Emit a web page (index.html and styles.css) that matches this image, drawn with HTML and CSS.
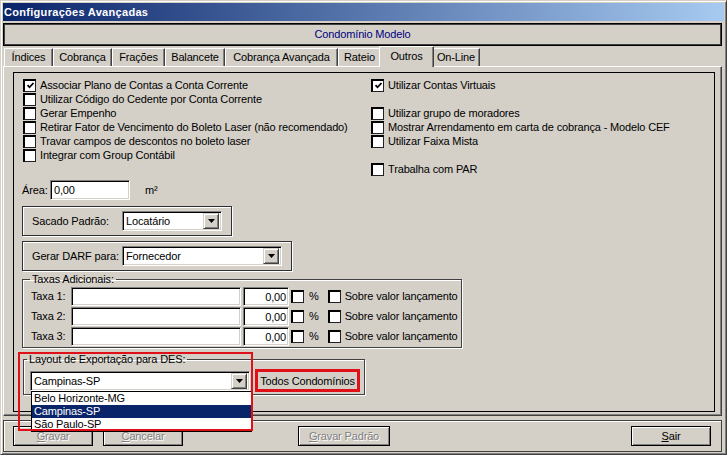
FILE: index.html
```html
<!DOCTYPE html>
<html lang="pt">
<head>
<meta charset="utf-8">
<title>Configurações Avançadas</title>
<link rel="stylesheet" href="styles.css">
</head>
<body>
<div class="window">
  <div class="titlebar">Configurações Avançadas</div>
  <div class="header">Condomínio Modelo</div>
  <div class="tabs">
    <div class="tab t1">Índices</div>
    <div class="tab t2">Cobrança</div>
    <div class="tab t3">Frações</div>
    <div class="tab t4">Balancete</div>
    <div class="tab t5">Cobrança Avançada</div>
    <div class="tab t6">Rateio</div>
    <div class="tab t7 active">Outros</div>
    <div class="tab t8">On-Line</div>
  </div>
  <div class="tabpage">
    <div class="panel">
      <div class="checks">
        <div class="col">
          <div class="chk-row"><span class="cb checked"><svg width="9" height="9" viewBox="0 0 9 9"><polyline points="1.5,4.2 3.5,6.3 7.5,2" fill="none" stroke="#000" stroke-width="1.8"/></svg></span>Associar Plano de Contas a Conta Corrente</div>
          <div class="chk-row"><span class="cb"></span>Utilizar Código do Cedente por Conta Corrente</div>
          <div class="chk-row"><span class="cb"></span>Gerar Empenho</div>
          <div class="chk-row"><span class="cb"></span>Retirar Fator de Vencimento do Boleto Laser (não recomendado)</div>
          <div class="chk-row"><span class="cb"></span>Travar campos de descontos no boleto laser</div>
          <div class="chk-row"><span class="cb"></span>Integrar com Group Contábil</div>
        </div>
        <div class="col">
          <div class="chk-row"><span class="cb checked"><svg width="9" height="9" viewBox="0 0 9 9"><polyline points="1.5,4.2 3.5,6.3 7.5,2" fill="none" stroke="#000" stroke-width="1.8"/></svg></span>Utilizar Contas Virtuais</div>
          <div class="chk-row"></div>
          <div class="chk-row"><span class="cb"></span>Utilizar grupo de moradores</div>
          <div class="chk-row"><span class="cb"></span>Mostrar Arrendamento em carta de cobrança - Modelo CEF</div>
          <div class="chk-row"><span class="cb"></span>Utilizar Faixa Mista</div>
          <div class="chk-row"></div>
          <div class="chk-row"><span class="cb"></span>Trabalha com PAR</div>
        </div>
      </div>

      <div class="area-row">
        <span class="area-label">Área:</span>
        <span class="edit area-edit">0,00</span>
        <span class="unit">m²</span>
      </div>

      <div class="boxed sacado">
        <span class="box-label">Sacado Padrão:</span>
        <div class="combo combo-sacado">
          <span class="combo-text">Locatário</span>
          <span class="combo-btn"><svg width="7" height="4" viewBox="0 0 7 4"><polygon points="0,0 7,0 3.5,4" fill="#000"/></svg></span>
        </div>
      </div>

      <div class="boxed darf">
        <span class="box-label">Gerar DARF para:</span>
        <div class="combo combo-darf">
          <span class="combo-text">Fornecedor</span>
          <span class="combo-btn"><svg width="7" height="4" viewBox="0 0 7 4"><polygon points="0,0 7,0 3.5,4" fill="#000"/></svg></span>
        </div>
      </div>

      <fieldset class="group taxas">
        <legend>Taxas Adicionais:</legend>
        <div class="taxa-row">
          <span class="taxa-label">Taxa 1:</span>
          <span class="edit taxa-desc"></span>
          <span class="edit taxa-val">0,00</span>
          <span class="cb cb-pct"></span><span class="pct">%</span>
          <span class="cb cb-sobre"></span><span>Sobre valor lançamento</span>
        </div>
        <div class="taxa-row">
          <span class="taxa-label">Taxa 2:</span>
          <span class="edit taxa-desc"></span>
          <span class="edit taxa-val">0,00</span>
          <span class="cb cb-pct"></span><span class="pct">%</span>
          <span class="cb cb-sobre"></span><span>Sobre valor lançamento</span>
        </div>
        <div class="taxa-row">
          <span class="taxa-label">Taxa 3:</span>
          <span class="edit taxa-desc"></span>
          <span class="edit taxa-val">0,00</span>
          <span class="cb cb-pct"></span><span class="pct">%</span>
          <span class="cb cb-sobre"></span><span>Sobre valor lançamento</span>
        </div>
      </fieldset>

      <fieldset class="group layout">
        <legend>Layout de Exportação para DES:</legend>
        <div class="layout-row">
          <div class="combo combo-layout">
            <span class="combo-text">Campinas-SP</span>
            <span class="combo-btn"><svg width="7" height="4" viewBox="0 0 7 4"><polygon points="0,0 7,0 3.5,4" fill="#000"/></svg></span>
          </div>
          <span class="red-wrap"><span class="btn todos">Todos Condomínios</span></span>
        </div>
      </fieldset>
    </div>
  </div>

  <div class="buttonbar">
    <span class="btn bar-btn disabled b-gravar"><u>G</u>ravar</span>
    <span class="btn bar-btn disabled b-cancelar"><u>C</u>ancelar</span>
    <span class="btn bar-btn disabled b-padrao"><u>G</u>ravar Padrão</span>
    <span class="btn bar-btn b-sair"><u>S</u>air</span>
  </div>

  <div class="droplist">
    <div class="item">Belo Horizonte-MG</div>
    <div class="item selected">Campinas-SP</div>
    <div class="item">São Paulo-SP</div>
  </div>
  <div class="red-frame"></div>
</div>
</body>
</html>
```

FILE: styles.css
```css
* { box-sizing: border-box; }
html, body { margin: 0; padding: 0; }
body {
  width: 727px;
  height: 455px;
  overflow: hidden;
  background: #d4d0c8;
  font: 11px "Liberation Sans", Arial, sans-serif;
  letter-spacing: -0.15px;
  color: #000;
}
.window {
  position: relative;
  width: 727px;
  height: 455px;
  background: #d4d0c8;
  border: 1px solid;
  border-color: #d4d0c8 #404040 #404040 #d4d0c8;
  box-shadow: inset 1px 1px #fff, inset -1px -1px #808080;
  padding: 2px;
}
.titlebar {
  height: 18px;
  background: linear-gradient(to right, #0a246a, #a6caf0);
  color: #fff;
  font-weight: bold;
  font-size: 11px;
  letter-spacing: 0.3px;
  line-height: 18px;
  padding-left: 1px;
  white-space: nowrap;
}
.header {
  margin-top: 2px;
  width: 719px;
  height: 23px;
  border: 1px solid #000;
  box-shadow: inset 1px 1px #404040, inset -1px -1px #404040;
  color: #000080;
  text-align: center;
  line-height: 21px;
}
.tabs {
  display: flex;
  width: 719px;
  height: 20px;
  padding-left: 1px;
}
.tab {
  margin-top: 2px;
  height: 18px;
  border-top: 1px solid #fff;
  border-left: 1px solid #fff;
  border-right: 1px solid #404040;
  box-shadow: inset -1px 0 #808080;
  text-align: center;
  line-height: 17px;
  white-space: nowrap;
  flex: none;
}
.t1 { width: 49px; }
.t2 { width: 59px; }
.t3 { width: 53px; }
.t4 { width: 60px; }
.t5 { width: 113px; }
.t6 { width: 43px; }
.t7 { width: 51px; }
.t8 { width: 48px; }
.tab.active {
  position: relative;
  z-index: 1;
  margin-top: 0;
  height: 21px;
  width: 55px;
  margin-left: -2px;
  margin-right: -2px;
  background: #d4d0c8;
  line-height: 18px;
}
.tabpage {
  width: 719px;
  height: 350px;
  border: 1px solid;
  border-color: #fff #404040 #404040 #fff;
  box-shadow: inset -1px -1px #808080;
  padding: 5px 6px 3px 9px;
}
.panel {
  width: 702px;
  height: 340px;
  border: 1px solid #000;
}
.checks {
  display: grid;
  grid-template-columns: 348px 1fr;
  padding: 5px 0 0 9px;
}
.col { display: flex; flex-direction: column; }
.chk-row {
  height: 14px;
  display: flex;
  align-items: center;
  white-space: nowrap;
}
.cb {
  flex: none;
  width: 13px;
  height: 13px;
  background: #fff;
  border-style: solid;
  border-width: 2px 1px 1px 2px;
  border-color: #000 #222 #222 #000;
  margin-right: 4px;
  display: inline-flex;
  align-items: center;
  justify-content: center;
}
.cb svg { display: block; }
.area-row {
  display: flex;
  align-items: center;
  height: 20px;
  margin-top: 4px;
  padding-left: 8px;
}
.area-label { width: 28px; }
.edit {
  display: inline-block;
  height: 20px;
  background: #fff;
  border: 1px solid;
  border-color: #808080 #fff #fff #808080;
  box-shadow: inset 1px 1px #000, inset -1px -1px #d4d0c8;
  line-height: 18px;
  padding: 0 3px;
  white-space: nowrap;
}
.area-edit { width: 80px; }
.unit { margin-left: 15px; }
.boxed {
  margin: 6px 0 0 8px;
  height: 30px;
  border: 1px solid #303030;
  box-shadow: inset 1px 1px #fff, 1px 1px #fff;
  display: flex;
  align-items: center;
  padding-left: 9px;
}
.sacado { width: 210px; }
.darf { width: 270px; margin-top: 5px; }
.box-label { width: 90px; white-space: nowrap; }
.combo {
  display: flex;
  align-items: center;
  height: 20px;
  background: #fff;
  border: 1px solid;
  border-color: #808080 #fff #fff #808080;
  box-shadow: inset 1px 1px #000, inset -1px -1px #d4d0c8;
  padding: 2px;
}
.combo-text { flex: 1; padding-left: 1px; line-height: 16px; white-space: nowrap; }
.combo-btn {
  flex: none;
  width: 16px;
  height: 16px;
  background: #d4d0c8;
  border: 1px solid;
  border-color: #d4d0c8 #404040 #404040 #d4d0c8;
  box-shadow: inset 1px 1px #fff, inset -1px -1px #808080;
  display: flex;
  align-items: center;
  justify-content: center;
}
.combo-btn svg { display: block; }
.combo-sacado { width: 100px; }
.combo-darf { width: 160px; }
.group {
  margin: 0;
  padding: 0 0 1px 0;
  border: 1px solid #404040;
  box-shadow: inset 1px 1px #fff, 1px 1px #fff;
  min-width: 0;
}
.group legend {
  padding: 0 2px;
  margin-left: 7px;
  line-height: 13px;
  white-space: nowrap;
}
.taxas {
  margin: 2px 0 0 8px;
  width: 440px;
}
.taxa-row {
  display: flex;
  align-items: center;
  height: 20px;
  padding-left: 8px;
  white-space: nowrap;
}
.taxa-label { width: 40px; }
.taxa-desc { width: 170px; height: 19px; }
.taxa-val { width: 46px; height: 19px; margin-left: 2px; text-align: right; padding-right: 2px; }
.cb-pct { margin-left: 2px; margin-right: 5px; }
.pct { margin-right: 9px; }
.layout {
  margin: 5px 0 0 9px;
  width: 342px;
  padding-bottom: 2px;
}
.layout legend { margin-left: 3px; }
.layout-row {
  display: flex;
  align-items: center;
  padding: 3px 0 0 6px;
  height: 26px;
}
.combo-layout { width: 220px; }
.red-wrap {
  margin-left: 5px;
  border: 3px solid #e01018;
  display: inline-block;
}
.btn {
  display: inline-flex;
  align-items: center;
  justify-content: center;
  background: #d4d0c8;
  white-space: nowrap;
}
.todos {
  width: 99px;
  height: 17px;
}
.buttonbar {
  margin-top: 4px;
  width: 719px;
  height: 32px;
  border: 1px solid #404040;
  box-shadow: inset 1px 1px #fff;
  display: flex;
  align-items: center;
  padding: 0 10px 0 9px;
}
.bar-btn {
  height: 20px;
  width: 80px;
  border: 1px solid #000;
  box-shadow: inset 1px 1px #fff, inset -1px -1px #808080;
}
.bar-btn.disabled { color: #808080; text-shadow: 1px 1px #fff; }
.b-cancelar { margin-left: 10px; }
.b-padrao { width: 92px; margin-left: 115px; }
.b-sair { margin-left: auto; }
.droplist {
  position: absolute;
  left: 30px;
  top: 390px;
  width: 221px;
  height: 41px;
  background: #fff;
  border: 1px solid #000;
  overflow: hidden;
  z-index: 5;
}
.item {
  height: 13px;
  line-height: 13px;
  padding-left: 2px;
  white-space: nowrap;
}
.item.selected { background: #0a246a; color: #fff; }
.red-frame {
  position: absolute;
  left: 17px;
  top: 351px;
  width: 235px;
  height: 79px;
  border: 2px solid #e01018;
  z-index: 6;
  pointer-events: none;
}
```
